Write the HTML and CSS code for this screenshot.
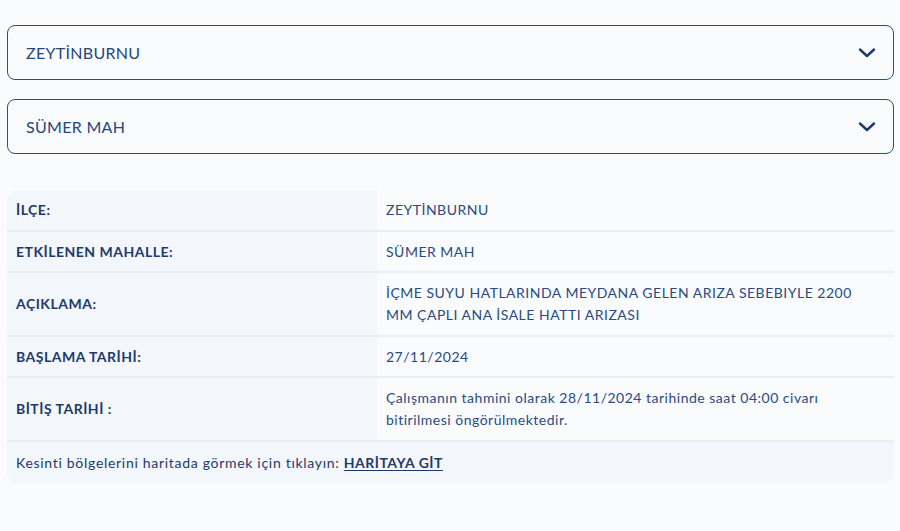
FILE: index.html
```html
<!DOCTYPE html>
<html lang="tr">
<head>
    <meta charset="UTF-8">
    <meta name="viewport" content="width=device-width, initial-scale=1.0">
    <title>Arıza Bilgisi</title>
    <link rel="stylesheet" href="styles.css">
</head>
<body>
    <div class="page">
        <div class="picker">
            <span>ZEYTİNBURNU</span>
            <svg class="chevron" width="18" height="10" viewBox="0 0 18 10"><path d="M2 1.5 L9 8 L16 1.5" fill="none" stroke="#1b3a6b" stroke-width="2.4" stroke-linecap="round" stroke-linejoin="round"/></svg>
        </div>
        <div class="picker">
            <span>SÜMER MAH</span>
            <svg class="chevron" width="18" height="10" viewBox="0 0 18 10"><path d="M2 1.5 L9 8 L16 1.5" fill="none" stroke="#1b3a6b" stroke-width="2.4" stroke-linecap="round" stroke-linejoin="round"/></svg>
        </div>

        <div class="info">
            <div class="row">
                <div class="label">İLÇE:</div>
                <div class="value">ZEYTİNBURNU</div>
            </div>
            <div class="row">
                <div class="label">ETKİLENEN MAHALLE:</div>
                <div class="value">SÜMER MAH</div>
            </div>
            <div class="row">
                <div class="label">AÇIKLAMA:</div>
                <div class="value">İÇME SUYU HATLARINDA MEYDANA GELEN ARIZA SEBEBIYLE 2200 MM ÇAPLI ANA İSALE HATTI ARIZASI</div>
            </div>
            <div class="row">
                <div class="label">BAŞLAMA TARİHİ:</div>
                <div class="value">27/11/2024</div>
            </div>
            <div class="row">
                <div class="label">BİTİŞ TARİHİ :</div>
                <div class="value">Çalışmanın tahmini olarak 28/11/2024 tarihinde saat 04:00 civarı bitirilmesi öngörülmektedir.</div>
            </div>
            <div class="map-link">
                Kesinti bölgelerini haritada görmek için tıklayın: <a href="#">HARİTAYA GİT</a>
            </div>
        </div>
    </div>
</body>
</html>
```

FILE: styles.css
```css
body {
    margin: 0;
    background-color: #f9fbfd;
    font-family: Lato, "Noto Sans", sans-serif;
    color: #1d3a6e;
}
.page {
    padding: 25px 6px 40px 7px;
}
.picker {
    display: flex;
    align-items: center;
    justify-content: space-between;
    height: 53px;
    padding: 0 17px 0 18px;
    margin-bottom: 19px;
    border: 1px solid #2a4d8c;
    border-radius: 8px;
    background-color: #f9fbfd;
    font-size: 16px;
    letter-spacing: 0.3px;
    color: #25467f;
}
.picker:last-of-type {
    margin-bottom: 0;
}
.info {
    margin-top: 36px;
    border-radius: 10px;
    overflow: hidden;
    background-color: #f3f6fa;
    font-size: 14px;
    line-height: 22px;
    letter-spacing: 0.7px;
}
.row {
    display: grid;
    grid-template-columns: 370px 1fr;
    border-bottom: 2px solid #eaedf1;
}
.label {
    display: flex;
    align-items: center;
    padding: 9px 9px 8.6px;
    background-color: #f3f6fa;
    font-weight: 700;
    letter-spacing: 0.5px;
    color: #1d3a6e;
}
.value {
    padding: 9px 20px 8.6px 9px;
    background-color: #f9fbfd;
    letter-spacing: 0.5px;
    color: #2a4a85;
}
.map-link {
    padding: 10px 9px 9px;
    color: #1d3a6e;
}
.map-link a {
    color: #1d3a6e;
    font-weight: 700;
    letter-spacing: 0.5px;
    text-decoration: underline;
    text-underline-offset: 2px;
}
```
